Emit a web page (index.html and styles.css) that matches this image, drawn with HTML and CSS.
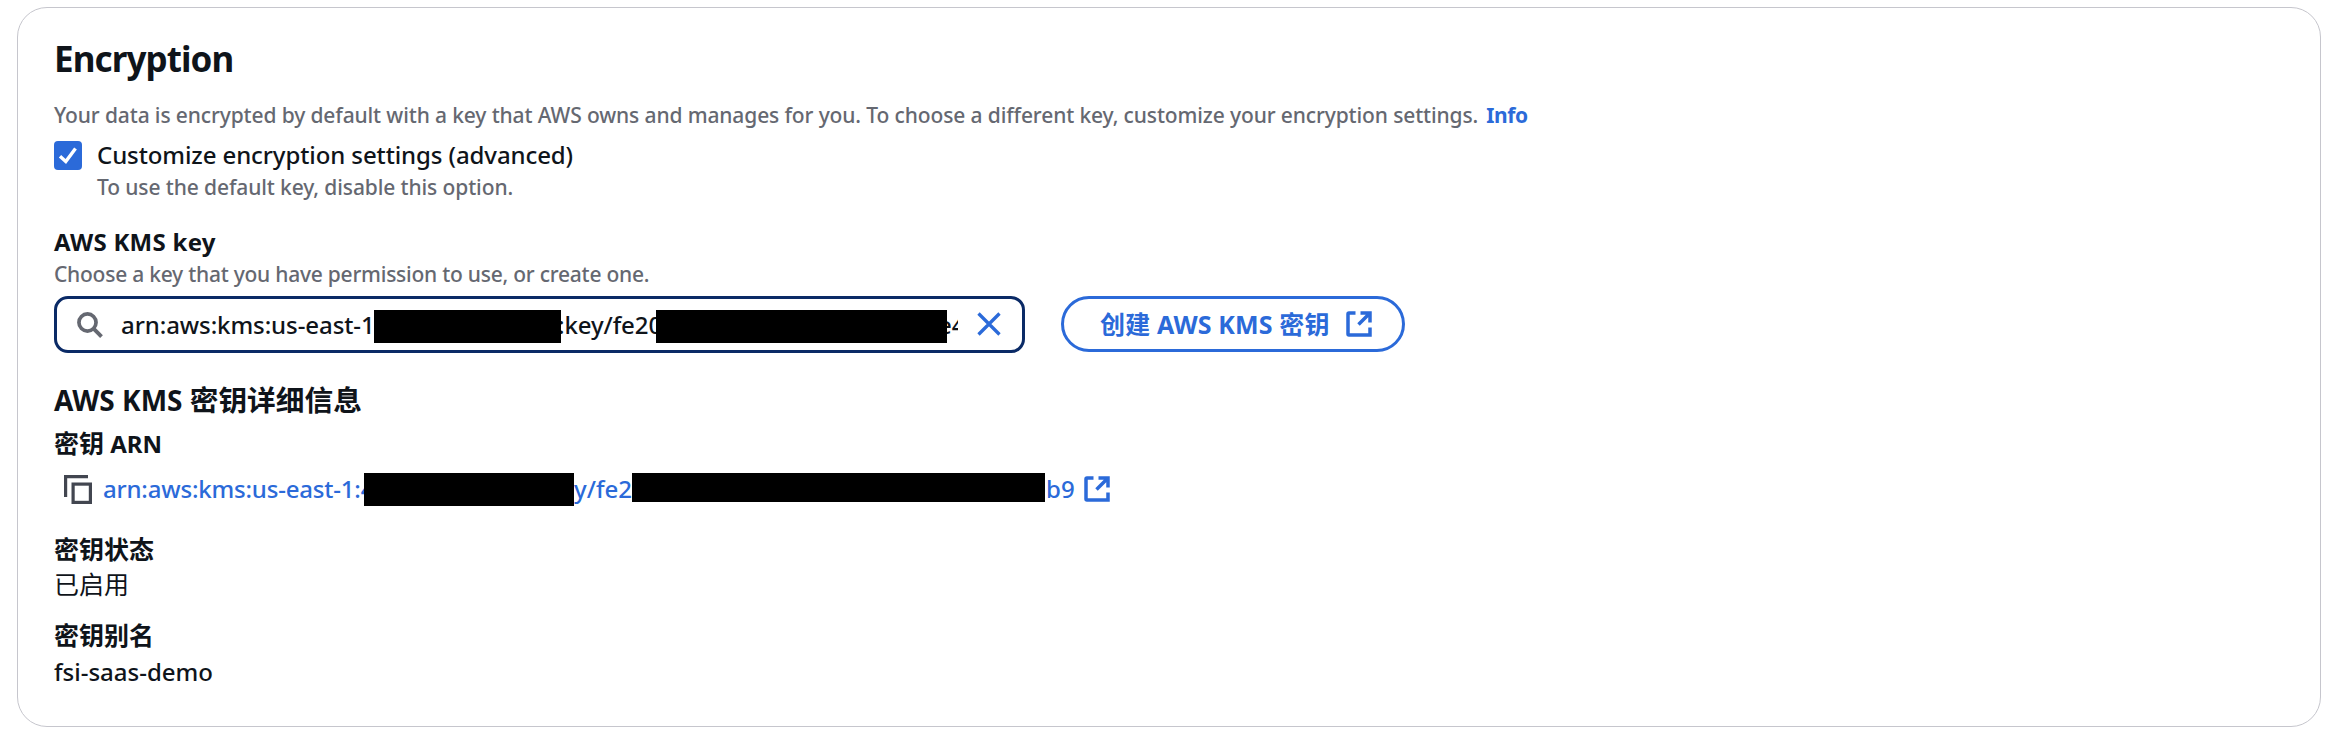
FILE: index.html
```
<!DOCTYPE html>
<html lang="zh-CN">
<head>
<meta charset="utf-8">
<title>Encryption</title>
<link rel="stylesheet" href="styles.css">
</head>
<body>
<section class="panel">
  <h2 class="title">Encryption</h2>
  <p class="hint intro"><span>Your data is encrypted by default with a key that AWS owns and manages for you. To choose a different key, customize your encryption settings.</span><a class="info">Info</a></p>
  <div class="option">
    <span class="checkbox"><svg viewBox="0 0 28 28"><path d="M6 15.2 L11.8 20.5 L21.5 7.5" fill="none" stroke="#fff" stroke-width="3.4"/></svg></span>
    <div>
      <div class="label option-label">Customize encryption settings (advanced)</div>
      <div class="hint option-hint">To use the default key, disable this option.</div>
    </div>
  </div>
  <div class="label strong field-label">AWS KMS key</div>
  <div class="hint field-hint">Choose a key that you have permission to use, or create one.</div>
  <div class="field-row">
    <div class="input">
      <svg class="search" viewBox="0 0 28 28"><circle cx="11.3" cy="11.3" r="9.2" fill="none" stroke="#656871" stroke-width="4"/><path d="M17.6 17.6 L26.4 26.4" stroke="#656871" stroke-width="4.2"/></svg>
      <span class="seg in-a">arn:aws:kms:us-east-1</span><span class="redact in-r1"></span><span class="seg in-b"><span class="in-b-text">:key/fe20</span></span><span class="redact in-r2"></span><span class="seg in-c"><span class="in-c-text">e4</span></span>
      <svg class="clear" viewBox="0 0 24 24"><path d="M1.5 1.5 L22.5 22.5 M22.5 1.5 L1.5 22.5" stroke="#2b6ad9" stroke-width="3.3"/></svg>
    </div>
    <a class="button"><span>创建 AWS KMS 密钥</span><svg class="external" viewBox="0 0 26 26"><path d="M9.5 2 H3 Q2 2 2 3 V23 Q2 24 3 24 H24 V16.5 M14.5 2 H24 V11.5 M24 2 L12.5 13.5" fill="none" stroke="#2b6ad9" stroke-width="3.5"/></svg></a>
  </div>
  <h3 class="subtitle">AWS KMS <span class="subtitle-han">密钥详细信息</span></h3>
  <div class="label strong arn-label"><span class="han">密钥</span> ARN</div>
  <div class="arn">
    <svg class="copy" viewBox="0 0 28 30"><path d="M1.6 22 V1.6 H24" fill="none" stroke="#424650" stroke-width="3.2"/><rect x="9.1" y="9.1" width="17.3" height="18.3" fill="none" stroke="#424650" stroke-width="3.2"/></svg>
    <span class="seg arn-a">arn:aws:kms:us-east-1:4</span><span class="redact arn-r1"></span><span class="seg arn-b">y/fe2</span><span class="redact arn-r2"></span><span class="seg arn-c">eb9</span>
    <svg class="external" viewBox="0 0 26 26"><path d="M9.5 2 H3 Q2 2 2 3 V23 Q2 24 3 24 H24 V16.5 M14.5 2 H24 V11.5 M24 2 L12.5 13.5" fill="none" stroke="#2b6ad9" stroke-width="3.5"/></svg>
  </div>
  <div class="label strong han state-label">密钥状态</div>
  <div class="label han state">已启用</div>
  <div class="label strong han alias-label">密钥别名</div>
  <div class="label value">fsi-saas-demo</div>
</section>
</body>
</html>
```
FILE: styles.css
```
* { box-sizing: border-box; }
body { margin: 0; background: #fff; color: #0f141a; font-family: "Noto Sans", "Noto Sans CJK SC", sans-serif; }
.panel { margin: 7px 0 0 17px; width: 2304px; height: 720px; padding: 27px 36px; border: 1px solid #c6c6cd; border-radius: 30px; white-space: nowrap; }
.title { margin: 0; height: 48px; font-size: 35px; line-height: 48px; font-weight: 700; letter-spacing: -0.9px; }
.hint { margin: 0; height: 30px; font-size: 21px; line-height: 30px; color: #656871; font-weight: 500; }
.intro { display: flex; margin-top: 17px; letter-spacing: -0.125px; }
.info { margin-left: 8px; color: #2b6ad9; font-weight: 700; letter-spacing: -0.4px; }
.label { height: 32px; font-size: 24px; line-height: 32px; font-weight: 500; }
.strong { font-weight: 700; }
.option { display: flex; gap: 15px; margin-top: 9px; }
.checkbox { width: 28px; height: 29px; margin-top: 2px; border-radius: 4px; background: #2b6ad9; }
.checkbox svg { display: block; width: 28px; height: 28px; }
.option-label { letter-spacing: -0.1px; }
.option-hint { margin-top: 1px; letter-spacing: -0.11px; }
.field-label { margin-top: 24px; letter-spacing: 0.27px; }
.field-hint { margin-top: 1px; letter-spacing: -0.24px; }
.field-row { display: flex; gap: 36px; margin-top: 7px; }
.input { display: flex; align-items: center; width: 971px; height: 57px; padding-left: 20px; border: 3px solid #0a2a66; border-radius: 14px; font-size: 24px; line-height: 33px; font-weight: 500; }
.seg { flex: none; }
.redact { position: relative; z-index: 1; flex: none; height: 33px; background: #000; }
.search { width: 26px; height: 26px; margin-right: 18px; flex: none; }
.in-a { width: 253px; letter-spacing: -0.08px; }
.in-r1 { width: 187px; margin-top: 4px; }
.in-b { width: 95px; }
.in-b-text { margin-left: -3px; letter-spacing: -0.1px; }
.in-r2 { width: 291px; margin-top: 4px; }
.in-c { width: 11px; overflow-x: clip; }
.in-c-text { margin-left: -9px; }
.clear { width: 24px; height: 24px; margin: -2px 0 0 19px; flex: none; }
.button { display: flex; align-items: center; width: 344px; height: 56px; padding-left: 36px; border: 3px solid #2b6ad9; border-radius: 28px; color: #2b6ad9; font-size: 25px; line-height: 32px; font-weight: 700; letter-spacing: 0.15px; }
.external { width: 26px; height: 26px; flex: none; margin-left: 16px; }
.subtitle { margin: 27px 0 0; height: 40px; font-size: 28px; line-height: 40px; font-weight: 700; }
.subtitle-han { font-size: 28.7px; }
.arn-label { margin-top: 7px; }
.arn { display: flex; align-items: flex-start; height: 33px; margin-top: 14px; padding-left: 10px; color: #2b6ad9; font-size: 24px; line-height: 32px; font-weight: 500; }
.copy { width: 28px; height: 30px; margin: 2px 11px 0 0; flex: none; }
.arn-a { width: 261px; letter-spacing: -0.19px; }
.arn-r1 { width: 210px; }
.arn-b { width: 58px; }
.arn-r2 { width: 413px; height: 29px; }
.arn-c { width: 31px; margin-left: -13px; margin-right: 13px; letter-spacing: 0.2px; }
.arn .external { margin: 3px 0 0 8px; }
.han { font-size: 25px; }
.state { margin-top: 2px; font-weight: 400; font-family: "Noto Sans CJK SC", sans-serif; }
.state-label { margin-top: 27px; }
.value { margin-top: 5px; }
.alias-label { margin-top: 20px; }
```
